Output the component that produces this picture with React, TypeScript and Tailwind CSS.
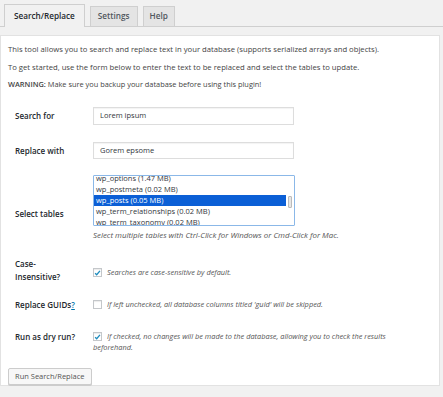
import React from 'react';

const tables = [
  'wp_options (1.47 MB)',
  'wp_postmeta (0.02 MB)',
  'wp_posts (0.05 MB)',
  'wp_term_relationships (0.02 MB)',
  'wp_term_taxonomy (0.02 MB)',
];

function Check({ checked }: { checked: boolean }) {
  return (
    <span className="flex h-[9px] w-[9px] shrink-0 items-center justify-center border border-[#c4c7ca] bg-white shadow-[inset_0_1px_1px_rgba(0,0,0,0.08)]">
      {checked && (
        <svg width="8" height="8" viewBox="0 0 8 8">
          <path d="M1.3 4.2 L3.1 6 L6.8 1.6" fill="none" stroke="#1e8cbe" strokeWidth="1.5" />
        </svg>
      )}
    </span>
  );
}

export default function App() {
  return (
    <div
      className="h-[397px] w-[443px] overflow-hidden bg-[#f1f1f1] pt-[5px] text-[#444]"
      style={{ fontFamily: '"Open Sans", "Noto Sans", sans-serif' }}
    >
      {/* Tabs */}
      <div className="flex h-[22px] items-end gap-[5px] border-b border-[#cfcfcf] pl-[4px]">
        <div className="-mb-px flex h-[23px] items-center border border-b-0 border-[#cfcfcf] bg-[#f1f1f1] px-[9px] text-[8.2px] font-semibold text-[#23282d]">
          Search/Replace
        </div>
        <div className="flex h-[20px] items-center border border-b-0 border-[#cfcfcf] bg-[#e4e4e4] px-[7px] text-[8.2px] font-semibold text-[#50575e]">
          Settings
        </div>
        <div className="flex h-[20px] items-center border border-b-0 border-[#cfcfcf] bg-[#e4e4e4] px-[6px] text-[8.2px] font-semibold text-[#50575e]">
          Help
        </div>
      </div>

      {/* Panel */}
      <div className="mt-[8px] h-[351px] w-[440px] border border-[#e2e2e2] bg-white pt-[7px]">
        <div className="pl-[7px] text-[7.7px] leading-[12px]">
          <p>This tool allows you to search and replace text in your database (supports serialized arrays and objects).</p>
          <p className="mt-[5.5px]">To get started, use the form below to enter the text to be replaced and select the tables to update.</p>
          <p className="mt-[5.5px] text-[7.4px]">
            <b className="font-semibold">WARNING:</b> Make sure you backup your database before using this plugin!
          </p>
        </div>

        {/* Search for */}
        <div className="mt-[17px] flex h-[18px] items-center">
          <div className="w-[92px] pl-[14px] text-[8px] font-semibold text-[#23282d]">Search for</div>
          <div className="flex h-[18px] w-[201px] items-center border border-[#ddd] pl-[6px] text-[7.5px] text-[#32373c] shadow-[inset_0_1px_1px_rgba(0,0,0,0.05)]">
            Lorem ipsum
          </div>
        </div>

        {/* Replace with */}
        <div className="mt-[17px] flex h-[17px] items-center">
          <div className="w-[92px] pl-[14px] text-[8px] font-semibold text-[#23282d]">Replace with</div>
          <div className="flex h-[17px] w-[201px] items-center border border-[#ddd] pl-[6px] text-[7.5px] text-[#32373c] shadow-[inset_0_1px_1px_rgba(0,0,0,0.05)]">
            Gorem epsome
          </div>
        </div>

        {/* Select tables */}
        <div className="mt-[16px] flex">
          <div className="flex w-[92px] items-center pl-[14px] pt-[12px] text-[8px] font-semibold text-[#23282d]">Select tables</div>
          <div>
            <div className="relative h-[51px] w-[202px] overflow-hidden rounded-[1px] border border-[#8bb8e8] bg-white text-[7.5px] text-[#32373c]">
              <div className="-mt-[3px] pr-[8px]">
                {tables.map((t) => (
                  <div
                    key={t}
                    className={
                      t.startsWith('wp_posts ')
                        ? 'h-[11px] bg-[#0b5fd6] pl-[2px] leading-[11px] text-white'
                        : 'h-[11px] pl-[2px] leading-[11px]'
                    }
                  >
                    {t}
                  </div>
                ))}
              </div>
              <div className="absolute right-0 top-0 flex h-full w-[8px] justify-center bg-white">
                <div className="mt-[20px] h-[12px] w-[4px] rounded-[1px] border border-[#bbb] bg-[#e6e6e6]" />
              </div>
            </div>
            <div className="mt-[3px] text-[7.9px] italic leading-[12px] text-[#555]">
              Select multiple tables with Ctrl-Click for Windows or Cmd-Click for Mac.
            </div>
          </div>
        </div>

        {/* Case-Insensitive */}
        <div className="mt-[16px] flex items-center">
          <div className="w-[92px] pl-[14px] text-[8px] font-semibold leading-[13px] text-[#23282d]">
            Case-
            <br />
            Insensitive?
          </div>
          <div className="mt-[6px] flex items-center gap-[5px]">
            <Check checked />
            <span className="text-[7.4px] italic text-[#555]">Searches are case-sensitive by default.</span>
          </div>
        </div>

        {/* Replace GUIDs */}
        <div className="mt-[16px] flex items-center">
          <div className="w-[92px] pl-[14px] text-[8px] font-semibold text-[#23282d]">
            Replace GUIDs<span className="text-[#0073aa] underline">?</span>
          </div>
          <div className="flex items-center gap-[5px]">
            <Check checked={false} />
            <span className="text-[7.4px] italic text-[#555]">
              If left unchecked, all database columns titled 'guid' will be skipped.
            </span>
          </div>
        </div>

        {/* Dry run */}
        <div className="mt-[20px] flex items-start">
          <div className="w-[92px] pl-[14px] text-[8px] font-semibold leading-[12px] text-[#23282d]">Run as dry run?</div>
          <div className="text-[7.4px] italic leading-[11px] text-[#555]">
            <div className="flex items-center gap-[5px]">
              <Check checked />
              <span>If checked, no changes will be made to the database, allowing you to check the results</span>
            </div>
            <div>beforehand.</div>
          </div>
        </div>

        {/* Button */}
        <div className="mt-[8px] pl-[7px]">
          <button className="h-[17px] rounded-[2px] border border-[#ccc] bg-[#f7f7f7] px-[6px] text-[7.5px] text-[#555] shadow-[0_1px_0_#ccc]">
            Run Search/Replace
          </button>
        </div>
      </div>
    </div>
  );
}
